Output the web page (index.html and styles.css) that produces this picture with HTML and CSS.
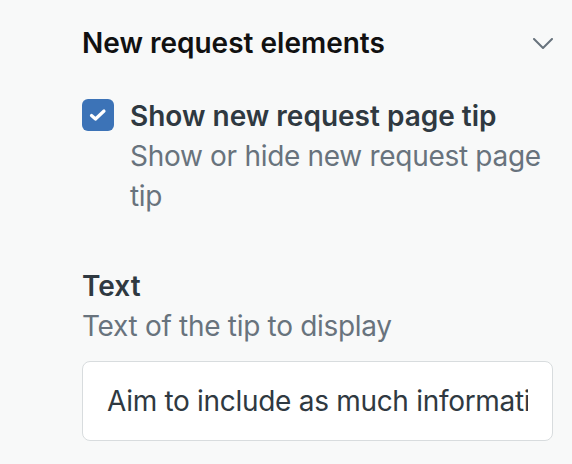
FILE: index.html
```html
<!DOCTYPE html>
<html>
<head>
<meta charset="utf-8">
<link rel="stylesheet" href="styles.css">
</head>
<body>
<div class="panel">
  <div class="section-head">
    <h2 class="section-title">New request elements</h2>
    <svg class="chevron" width="20" height="11" viewBox="0 0 20 11"><path d="M1 1 L10 10 L19 1" fill="none" stroke="#68737d" stroke-width="2" stroke-linecap="round" stroke-linejoin="round"/></svg>
  </div>
  <div class="check-row">
    <span class="checkbox"><svg width="18" height="14" viewBox="0 0 18 14"><path d="M2.5 7.5 L6.5 11 L15 3" fill="none" stroke="#fff" stroke-width="3.2" stroke-linecap="round" stroke-linejoin="round"/></svg></span>
    <div class="check-text">
      <div class="check-label">Show new request page tip</div>
      <div class="hint">Show or hide new request page tip</div>
    </div>
  </div>
  <div class="field">
    <div class="field-label">Text</div>
    <div class="hint">Text of the tip to display</div>
    <input class="input" type="text" value="Aim to include as much information as possible">
  </div>
</div>
</body>
</html>
```
FILE: styles.css
```css
html, body { margin: 0; padding: 0; }
body {
  background: #f8f9f9;
  font-family: Inter, "Open Sans", sans-serif;
  font-size: 28px;
  line-height: 40px;
  width: 572px;
  height: 464px;
  overflow: hidden;
}
.panel {
  padding: 23px 19px 0 82px;
}
.section-head {
  display: flex;
  align-items: center;
  justify-content: space-between;
  height: 40px;
}
.section-title {
  margin: 0;
  font-size: 28px;
  line-height: 40px;
  font-weight: 600;
  color: #111;
}
.check-row {
  display: flex;
  gap: 16px;
  margin-top: 33px;
}
.checkbox {
  flex: none;
  width: 32px;
  height: 32px;
  margin-top: 3px;
  border-radius: 6px;
  background: #3c73b7;
  display: flex;
  align-items: center;
  justify-content: center;
}
.check-label {
  font-weight: 600;
  color: #2f3941;
}
.hint {
  color: #68737d;
  letter-spacing: -0.3px;
}
.field { margin-top: 50px; }
.field-label {
  font-weight: 600;
  color: #2f3941;
}
.input {
  display: block;
  box-sizing: border-box;
  width: 100%;
  margin: 15px 0 0;
  height: 80px;
  background: #fff;
  border: 1px solid #d8dcde;
  border-radius: 8px;
  padding: 0 24px;
  font-family: inherit;
  font-size: 28px;
  letter-spacing: -0.3px;
  color: #2f3941;
  outline: none;
}
```
